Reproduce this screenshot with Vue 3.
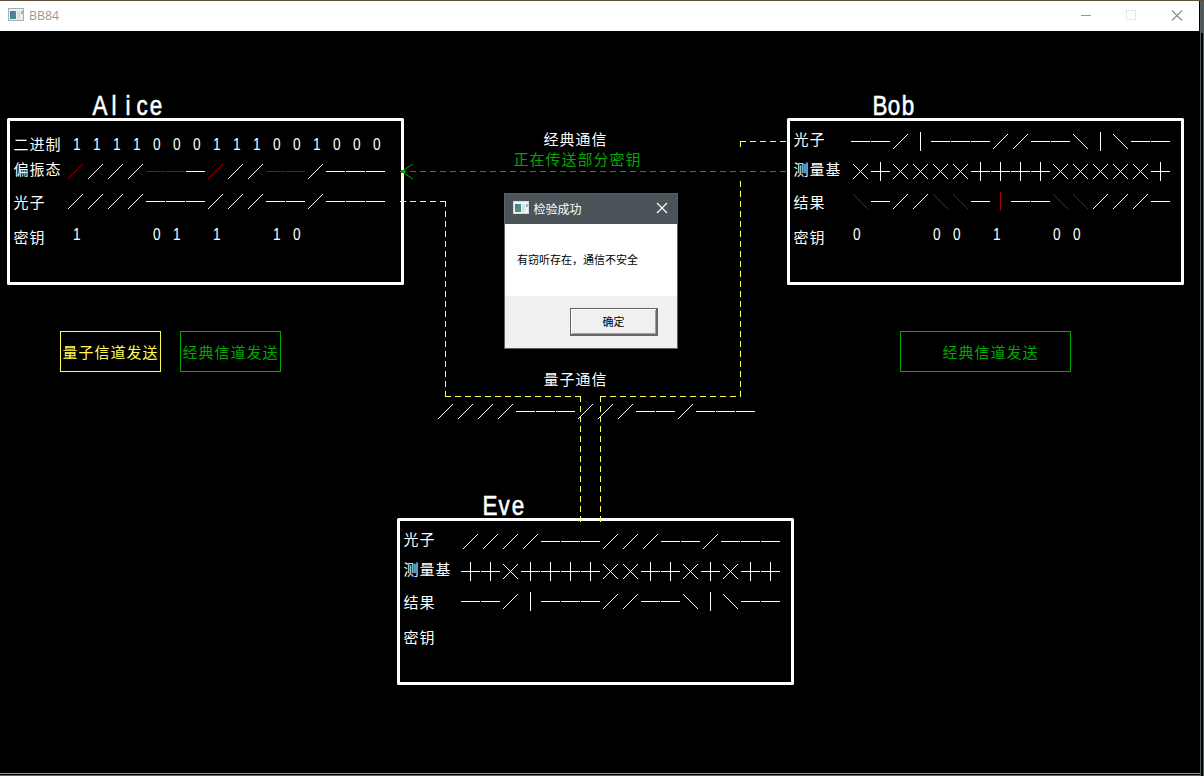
<script setup>
const red = '#a80000'
const white = '#ffffff'

// Marks of one symbol drawn around (x, y) on the pixel grid
const shapes = {
  '/': 'M-7 8L8 -7',
  '\\': 'M-7 -7L8 8',
  '-': 'M-9 .5H10',
  '|': 'M.5 -9V10',
  '+': 'M-9 .5H10M.5 -9V10',
  x: 'M-7 8L8 -7M-7 -7L8 8',
}

const row = (x, y, text, marked = []) =>
  [...text].map((s, i) => ({
    d: shapes[s],
    at: `translate(${x + i * 20} ${y})`,
    color: marked.includes(i) ? red : white,
  }))

const symbols = [
  ...row(75, 171, '////---///--/---', [0, 4, 5, 7, 10, 11]),
  ...row(75, 201, '////---///--/---'),
  ...row(860, 141, '--/|---//--\\|\\--'),
  ...row(860, 171, 'x+xxxx++++xxxxx+'),
  ...row(860, 201, '\\-//\\\\-|--\\\\///-', [0, 4, 5, 7, 10, 11]),
  ...row(445, 411, '////---///--/---'),
  ...row(470, 541, '////---///--/---'),
  ...row(470, 571, '++x++++xx++x+x++'),
  ...row(470, 601, '--/|---//--\\|\\--'),
]

const digitRow = (x, y, text) =>
  [...text].map((c, i) => ({ c, x: x + i * 20, y })).filter((d) => d.c !== ' ')

const digits = [
  ...digitRow(76.8, 150, '1111000111001000'),
  ...digitRow(76.8, 240, '1   01 1  10'),
  ...digitRow(856.8, 240, '0   00 1  00'),
]

const boxes = [
  { x: 8.5, y: 119.5 },
  { x: 788.5, y: 119.5 },
  { x: 398.5, y: 519.5 },
]

const names = [
  { x: 100, y: 115, chars: 'Alice' },
  { x: 880, y: 115, chars: 'Bob' },
  { x: 490, y: 515, chars: 'Eve' },
]
const nameX = (n) => [...n.chars].map((_, i) => (i * 14) / 0.8).join(' ')

const labels = [
  { x: 13, y: 150, t: '二进制' },
  { x: 13, y: 175, t: '偏振态' },
  { x: 13, y: 208, t: '光子' },
  { x: 13, y: 243, t: '密钥' },
  { x: 793, y: 145, t: '光子' },
  { x: 793, y: 175, t: '测量基' },
  { x: 793, y: 208, t: '结果' },
  { x: 793, y: 243, t: '密钥' },
  { x: 403, y: 545, t: '光子' },
  { x: 403, y: 575, t: '测量基' },
  { x: 403, y: 608, t: '结果' },
  { x: 403, y: 643, t: '密钥' },
  { x: 543, y: 145, t: '经典通信' },
  { x: 543, y: 385, t: '量子通信' },
  { x: 513, y: 165, t: '正在传送部分密钥', cls: 'green' },
  { x: 62, y: 358, t: '量子信道发送', cls: 'yellow' },
  { x: 182, y: 358, t: '经典信道发送', cls: 'green' },
  { x: 942, y: 358, t: '经典信道发送', cls: 'green' },
]

const wires = [
  'M400 201.5H446',
  'M445.5 201V397',
  'M445 396.5H581',
  'M580.5 396V522',
  'M600.5 396V522',
  'M600 396.5H741',
  'M740.5 141V147',
  'M740.5 181V397',
  'M740 141.5H786',
]
</script>

<template>
  <div class="window">
    <header class="titlebar">
      <svg class="app-icon" width="16" height="14" viewBox="0 0 16 14">
        <rect x=".5" y=".5" width="15" height="12" fill="#eceeee" stroke="#a9b0b4" />
        <rect x="2" y="3" width="6" height="8" fill="#4a8a8e" />
        <rect x="2" y="3" width="3" height="4" fill="#4b77a5" />
        <rect x="9" y="3" width="3" height="8" fill="#dcdede" />
        <rect x="13" y="3" width="2" height="3" fill="#8fb4c4" />
      </svg>
      <span class="title">BB84</span>
      <svg class="controls" width="110" height="20" viewBox="0 0 110 20">
        <path d="M1 10.5H11" stroke="#999" />
        <rect x="46.5" y="5.5" width="9" height="9" fill="none" stroke="#e6e6e6" />
        <path d="M92 5.5L102 15.5M102 5.5L92 15.5" stroke="#8c8c8c" stroke-width="1.1" />
      </svg>
    </header>

    <main class="stage">
      <svg class="scene" width="1199" height="742" viewBox="0 31 1199 742">
        <rect
          v-for="(b, i) in boxes" :key="'b' + i" :x="b.x" :y="b.y"
          width="394" height="164" fill="none" stroke="#fff" stroke-width="3" stroke-linejoin="round"
        />
        <g fill="none" stroke="#ffff54" shape-rendering="crispEdges" stroke-dasharray="6 4">
          <path v-for="w in wires" :key="w" :d="w" />
        </g>
        <g fill="none" stroke="#00a800">
          <path d="M400 171.5H786" stroke-dasharray="6 4" shape-rendering="crispEdges" />
          <path d="M413 164L401.5 171.5L413 179" />
          <path d="M401 171.5H405" stroke-width="3" />
        </g>
        <g fill="none" shape-rendering="crispEdges">
          <rect x="60.5" y="331.5" width="100" height="40" stroke="#ffff54" />
          <rect x="180.5" y="331.5" width="100" height="40" stroke="#00a800" />
          <rect x="900.5" y="331.5" width="170" height="40" stroke="#00a800" />
        </g>
        <path
          v-for="(s, i) in symbols" :key="'s' + i" :d="s.d" :transform="s.at" :stroke="s.color"
          fill="none" shape-rendering="crispEdges"
        />
        <text
          v-for="(d, i) in digits" :key="'d' + i" class="digit" :x="d.x" :y="d.y"
          textLength="7.6" lengthAdjust="spacingAndGlyphs"
        >{{ d.c }}</text>
        <text
          v-for="n in names" :key="n.chars" class="name" :x="nameX(n)"
          :transform="`translate(${n.x} ${n.y}) scale(.8 1)`"
        >{{ n.chars }}</text>
        <text v-for="(l, i) in labels" :key="'l' + i" class="label" :class="l.cls" :x="l.x + 0.5" :y="l.y">{{ l.t }}</text>
      </svg>

      <section class="dialog">
        <div class="dialog-head">
          <svg class="app-icon" width="16" height="14" viewBox="0 0 16 14">
            <rect x=".5" y=".5" width="15" height="12" fill="#f4f5f5" stroke="#d5d9db" />
            <rect x="2" y="3" width="6" height="8" fill="#4a9086" />
            <rect x="2" y="3" width="3" height="4" fill="#4b77a5" />
            <rect x="9" y="3" width="3" height="8" fill="#dcdede" />
            <rect x="13" y="3" width="2" height="3" fill="#8fb4c4" />
          </svg>
          <span class="dialog-title">检验成功</span>
          <svg class="close" width="12" height="12" viewBox="0 0 12 12">
            <path d="M1 1L11 11M11 1L1 11" stroke="#fff" stroke-width="1.2" />
          </svg>
        </div>
        <p class="message">有窃听存在，通信不安全</p>
        <div class="actions"><button class="ok">确定</button></div>
      </section>
    </main>
    <i class="edge-right"></i>
    <i class="edge-bottom"></i>
  </div>
</template>

<style>
body {
  background: #000;
  overflow: hidden;
}
</style>

<style scoped>
.window {
  position: relative;
  width: 1204px;
  height: 776px;
  box-sizing: border-box;
  border-top: 1px solid #5c4f3f;
  background: #000;
  font-family: "Liberation Sans", "Noto Sans CJK SC", sans-serif;
  overflow: hidden;
}
.titlebar {
  display: flex;
  align-items: center;
  width: 1199px;
  height: 30px;
  box-sizing: border-box;
  padding: 0 8px 2px;
  background: #fff;
}
.app-icon {
  flex: none;
}
.title {
  flex: 1;
  margin-left: 5px;
  font: 12.3px "Open Sans", sans-serif;
  color: #a3988f;
}
.controls {
  margin-right: 1px;
}
.stage {
  position: relative;
  width: 1199px;
  height: 742px;
}
.scene {
  display: block;
}
.label {
  font: 15px "Liberation Sans", "Noto Sans CJK SC", sans-serif;
  letter-spacing: 1px;
  fill: #fff;
}
.label.green {
  fill: #00a800;
}
.label.yellow {
  fill: #ffff54;
}
.digit {
  font: 16px "Liberation Sans Narrow", "Liberation Sans", sans-serif;
  fill: #fff;
  text-anchor: middle;
}
.name {
  font: 28px "Liberation Sans", sans-serif;
  fill: #fff;
  stroke: #fff;
  stroke-width: 0.6px;
  text-anchor: middle;
}
.dialog {
  position: absolute;
  left: 504px;
  top: 162px;
  width: 174px;
  height: 156px;
  box-sizing: border-box;
  display: flex;
  flex-direction: column;
  border: 1px solid #566268;
  background: #fff;
  font-family: "Noto Sans CJK SC", sans-serif;
}
.dialog-head {
  display: flex;
  align-items: center;
  height: 30px;
  box-sizing: border-box;
  padding: 0 9px 2px 8px;
  background: #4b5459;
}
.dialog-title {
  flex: 1;
  margin-left: 4.5px;
  font-size: 12px;
  color: #fff;
}
.message {
  flex: 1;
  display: flex;
  align-items: center;
  margin: 0;
  padding: 0 0 2px 12px;
  font-size: 11px;
  color: #000;
}
.actions {
  display: flex;
  justify-content: flex-end;
  align-items: center;
  height: 52px;
  padding-right: 19px;
  background: #f0f0f0;
}
.ok {
  width: 88px;
  height: 28px;
  padding: 0 1px 2px 0;
  border: 1px solid #646464;
  border-radius: 0;
  background: #f0f0f0;
  box-shadow: inset -1px -1px #696969, inset 1px 1px #fff, inset -2px -2px #a0a0a0;
  font: 11px "Noto Sans CJK SC", sans-serif;
  color: #000;
}
.edge-right {
  position: absolute;
  right: 0;
  top: 0;
  width: 4px;
  height: 100%;
  border-left: 1px solid #565e60;
  border-right: 1px solid #565e60;
  box-sizing: border-box;
  background: linear-gradient(#4b585e 32px, #000 32px);
}
.edge-bottom {
  position: absolute;
  left: 0;
  bottom: 0;
  width: 1200px;
  height: 3px;
  box-sizing: border-box;
  border-top: 1px solid #8d918c;
  border-bottom: 1px solid #5c625e;
}
</style>
